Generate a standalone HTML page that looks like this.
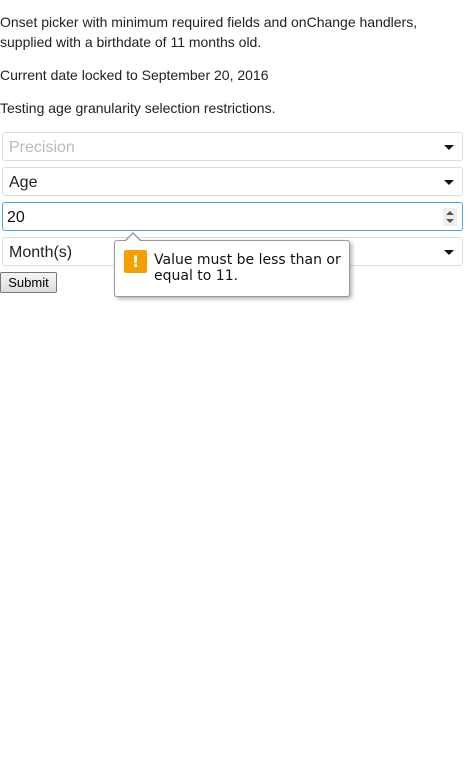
<!DOCTYPE html>
<html><head><meta charset="utf-8"><style>
body{margin:0;background:#fff;font-family:"Liberation Sans",sans-serif;font-size:14px;color:#222;width:470px;height:768px;position:relative;overflow:hidden}
p{position:absolute;left:0;margin:0;line-height:20px}
.box{position:absolute;left:2px;width:459px;height:27px;border:1px solid #ddd;border-radius:3px;font-size:16px;line-height:27px;box-sizing:content-box}
.box span{position:absolute;left:6px;top:1px}
.caret{position:absolute;right:8px;top:12px;width:0;height:0;border-left:5px solid transparent;border-right:5px solid transparent;border-top:5px solid #111}
.focus{border-color:#4aa8e4}
.spin{position:absolute;right:5px;top:5px;width:14px;height:18px;background:#eee}
.spin:before{content:"";position:absolute;left:3px;top:3px;border-left:4px solid transparent;border-right:4px solid transparent;border-bottom:4px solid #555}
.spin:after{content:"";position:absolute;left:3px;top:11px;border-left:4px solid transparent;border-right:4px solid transparent;border-top:4px solid #555}
.btn{position:absolute;left:0;top:272px;width:55px;height:19px;border:1px solid #777;border-radius:2px;background:linear-gradient(#f6f6f6,#dcdcdc);font-size:13px;line-height:19px;text-align:center;color:#000}
.tip{position:absolute;left:114px;top:240px;width:234px;height:55px;border:1px solid #999;border-radius:3px;background:#fff;box-shadow:2px 2px 4px rgba(0,0,0,.3);font-family:"DejaVu Sans",sans-serif;font-size:14px;color:#111}
.tip .a1{position:absolute;left:9px;top:-9px;width:0;height:0;border-left:9px solid transparent;border-right:9px solid transparent;border-bottom:9px solid #999}
.tip .a2{position:absolute;left:10px;top:-7px;width:0;height:0;border-left:8px solid transparent;border-right:8px solid transparent;border-bottom:8px solid #fff}
.ic{position:absolute;left:9px;top:9px;width:23px;height:23px;background:#f5a000;border-radius:2px;color:#fff;font-weight:bold;text-align:center;line-height:23px;font-size:16px}
.tx{position:absolute;left:39px;top:11px;line-height:16px}
</style></head><body>
<p style="top:12px">Onset picker with minimum required fields and onChange handlers,<br>supplied with a birthdate of 11 months old.</p>
<p style="top:65px">Current date locked to September 20, 2016</p>
<p style="top:98px">Testing age granularity selection restrictions.</p>
<div class="box" style="top:132px;color:#bbb"><span>Precision</span><div class="caret"></div></div>
<div class="box" style="top:167px"><span>Age</span><div class="caret"></div></div>
<div class="box focus" style="top:202px;color:#111"><span style="left:4px">20</span><div class="spin"></div></div>
<div class="box" style="top:237px"><span>Month(s)</span><div class="caret"></div></div>
<div class="btn">Submit</div>
<div class="tip"><div class="a1"></div><div class="a2"></div><div class="ic">!</div><div class="tx">Value must be less than or<br>equal to 11.</div></div>
</body></html>
